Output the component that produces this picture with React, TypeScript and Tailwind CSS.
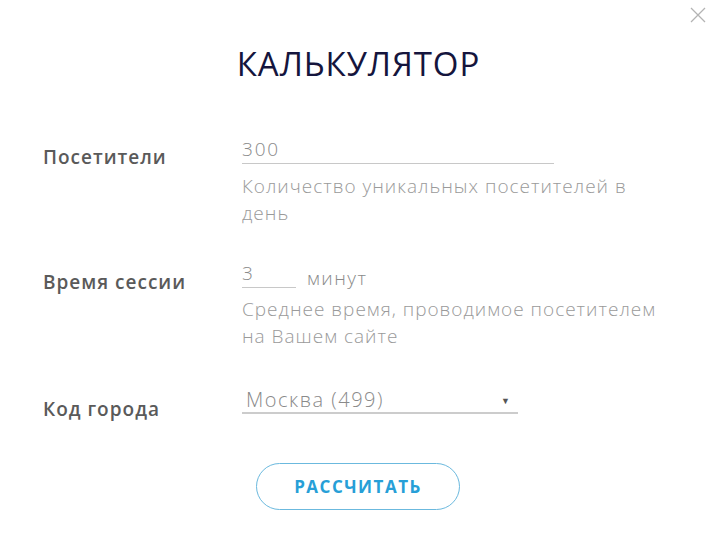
import { useState } from 'react';

const font = { fontFamily: '"Open Sans", "Noto Sans", sans-serif' };

export default function App() {
    const [visitors, setVisitors] = useState('300');
    const [minutes, setMinutes] = useState('3');
    const [city, setCity] = useState('499');

    return (
        <div className="relative w-[710px] h-[550px] bg-white" style={font}>
            <button className="absolute top-[7px] right-[4px] w-[16px] h-[16px] text-[#b3b3b3]" aria-label="Закрыть">
                <svg viewBox="0 0 16 16" className="w-full h-full" fill="none" stroke="currentColor" strokeWidth="1.3">
                    <path d="M1 1L15 15M15 1L1 15" />
                </svg>
            </button>

            <h1 className="pt-[44px] pl-[7px] text-center text-[33px] leading-[40px] font-medium tracking-[0.9px] text-[#15153d]">
                КАЛЬКУЛЯТОР
            </h1>

            <div className="mt-[50px] pl-[43px]">
                {/* Visitors */}
                <div className="flex">
                    <label className="w-[199px] pt-[11px] text-[19px] leading-[24px] font-semibold text-[#5a5a5a] tracking-[1px]">
                        Посетители
                    </label>
                    <div>
                        <input
                            value={visitors}
                            onChange={(e) => setVisitors(e.target.value)}
                            className="w-[312px] h-[30px] border-b border-[#c8c8c8] text-[19px] font-light text-[#8a8a8a] tracking-[1.8px] outline-none"
                        />
                        <p className="mt-[9px] w-[416px] text-[19px] leading-[27px] font-light text-[#9a9a9a] tracking-[1px]">
                            Количество уникальных посетителей в день
                        </p>
                    </div>
                </div>

                {/* Session time */}
                <div className="flex mt-[31px]">
                    <label className="w-[199px] pt-[12px] text-[19px] leading-[24px] font-semibold text-[#5a5a5a] tracking-[1px]">
                        Время сессии
                    </label>
                    <div>
                        <div className="flex items-end">
                            <input
                                value={minutes}
                                onChange={(e) => setMinutes(e.target.value)}
                                className="w-[54px] h-[30px] border-b border-[#c8c8c8] text-[19px] font-light text-[#8a8a8a] tracking-[1.5px] outline-none"
                            />
                            <span className="ml-[11px] text-[19px] leading-[20px] font-light text-[#8a8a8a] tracking-[1.5px]">минут</span>
                        </div>
                        <p className="mt-[8px] w-[416px] text-[19px] leading-[27px] font-light text-[#9a9a9a] tracking-[1px]">
                            Среднее время, проводимое посетителем на Вашем сайте
                        </p>
                    </div>
                </div>

                {/* City code */}
                <div className="flex items-start mt-[24px]">
                    <label className="w-[199px] pt-[23px] text-[19px] leading-[24px] font-semibold text-[#5a5a5a] tracking-[1px]">
                        Код города
                    </label>
                    <div className="relative mt-[12px] w-[276px] h-[28px] border-b-[2px] border-[#cccccc]">
                        <select
                            value={city}
                            onChange={(e) => setCity(e.target.value)}
                            className="w-full h-[26px] pl-[4px] pt-[2px] pb-0 appearance-none bg-transparent text-[20px] leading-[24px] font-light text-[#8a8a8a] tracking-[1.5px] outline-none"
                        >
                            <option value="499">Москва (499)</option>
                            <option value="495">Москва (495)</option>
                            <option value="812">Санкт-Петербург (812)</option>
                        </select>
                        <span className="pointer-events-none absolute right-[8px] top-[10px] text-[9px] leading-none text-[#555]">▼</span>
                    </div>
                </div>

                <div className="mt-[42px] pl-[213px]">
                    <button className="w-[204px] h-[47px] rounded-full border border-[#6bb9de] text-[17px] font-bold text-[#279fd7] tracking-[1.5px]">
                        РАССЧИТАТЬ
                    </button>
                </div>
            </div>
        </div>
    );
}
